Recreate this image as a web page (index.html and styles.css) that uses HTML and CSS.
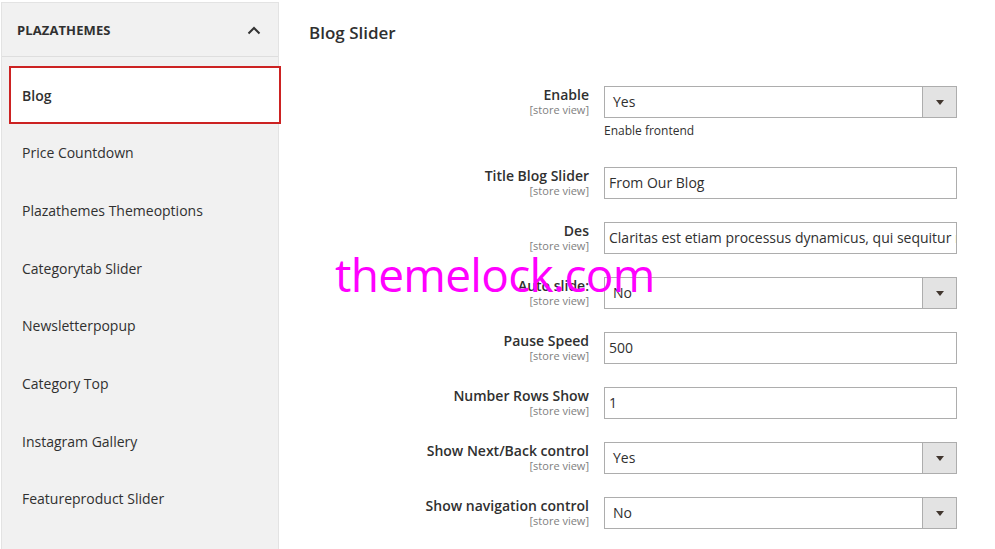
FILE: index.html
```html
<!DOCTYPE html>
<html>
<head>
<meta charset="utf-8">
<link rel="stylesheet" href="styles.css">
</head>
<body>
<div class="page">
  <aside class="sidebar">
    <div class="side-head">
      <span class="side-title">PLAZATHEMES</span>
      <svg class="chev" width="14" height="9" viewBox="0 0 14 9"><path d="M1.5 7.5 L7 2 L12.5 7.5" fill="none" stroke="#333" stroke-width="2"/></svg>
    </div>
    <ul class="side-list">
      <li class="side-item active">Blog</li>
      <li class="side-item">Price Countdown</li>
      <li class="side-item">Plazathemes Themeoptions</li>
      <li class="side-item">Categorytab Slider</li>
      <li class="side-item">Newsletterpopup</li>
      <li class="side-item">Category Top</li>
      <li class="side-item">Instagram Gallery</li>
      <li class="side-item">Featureproduct Slider</li>
    </ul>
  </aside>
  <main class="main">
    <h1 class="section-title">Blog Slider</h1>
    <div class="form">
      <div class="row">
        <div class="label"><span class="lbl">Enable</span><span class="scope">[store view]</span></div>
        <div class="control">
          <div class="select"><span class="val">Yes</span><span class="arrow"></span></div>
          <div class="note">Enable frontend</div>
        </div>
      </div>
      <div class="row">
        <div class="label"><span class="lbl">Title Blog Slider</span><span class="scope">[store view]</span></div>
        <div class="control"><div class="input">From Our Blog</div></div>
      </div>
      <div class="row">
        <div class="label"><span class="lbl">Des</span><span class="scope">[store view]</span></div>
        <div class="control"><div class="input">Claritas est etiam processus dynamicus, qui sequitur mutationem consuetudium lectorum.</div></div>
      </div>
      <div class="row">
        <div class="label"><span class="lbl">Auto slide:</span><span class="scope">[store view]</span></div>
        <div class="control"><div class="select"><span class="val">No</span><span class="arrow"></span></div></div>
      </div>
      <div class="row">
        <div class="label"><span class="lbl">Pause Speed</span><span class="scope">[store view]</span></div>
        <div class="control"><div class="input">500</div></div>
      </div>
      <div class="row">
        <div class="label"><span class="lbl">Number Rows Show</span><span class="scope">[store view]</span></div>
        <div class="control"><div class="input">1</div></div>
      </div>
      <div class="row">
        <div class="label"><span class="lbl">Show Next/Back control</span><span class="scope">[store view]</span></div>
        <div class="control"><div class="select"><span class="val">Yes</span><span class="arrow"></span></div></div>
      </div>
      <div class="row">
        <div class="label"><span class="lbl">Show navigation control</span><span class="scope">[store view]</span></div>
        <div class="control"><div class="select"><span class="val">No</span><span class="arrow"></span></div></div>
      </div>
    </div>
  </main>
</div>
<div class="watermark">themelock.com</div>
</body>
</html>
```

FILE: styles.css
```css
* { box-sizing: border-box; }
html, body { margin: 0; padding: 0; background: #fff; }
body {
  font-family: "Open Sans", "Liberation Sans", sans-serif;
  color: #303030;
  overflow: hidden;
}
.page {
  display: flex;
  min-height: 100vh;
  padding: 2px 0 0 1px;
}
.sidebar {
  width: 278px;
  flex: none;
  background: #f1f1f1;
  border: 1px solid #e3e3e3;
  border-bottom: none;
}
.side-head {
  height: 54px;
  display: flex;
  align-items: center;
  justify-content: space-between;
  padding: 0 17px 0 15px;
  border-bottom: 1px solid #dedede;
}
.side-title {
  font-size: 13px;
  font-weight: 700;
  color: #303030;
  letter-spacing: 0.1px;
}
.chev { display: block; margin-top: 1px; }
.side-list {
  list-style: none;
  margin: 9px 0 0 0;
  padding: 0;
}
.side-item {
  height: 57.7px;
  display: flex;
  align-items: center;
  padding-left: 20px;
  font-size: 14px;
  color: #303030;
}
.side-item.active {
  height: 58px;
  background: #fff;
  border: 2px solid #cc2222;
  margin-left: 7px;
  margin-right: -3px;
  padding-left: 11px;
  font-weight: 600;
}
.main {
  flex: 1;
  padding: 19px 0 0 30px;
}
.section-title {
  margin: 0;
  font-size: 17px;
  font-weight: 600;
  line-height: 24px;
  color: #303030;
}
.form {
  margin-top: 41px;
  display: flex;
  flex-direction: column;
  gap: 23px;
}
.row {
  display: grid;
  grid-template-columns: 280px 353px;
  column-gap: 15px;
}
.label {
  display: flex;
  flex-direction: column;
  align-items: flex-end;
  text-align: right;
}
.lbl {
  font-size: 14px;
  font-weight: 600;
  line-height: 18px;
  color: #303030;
}
.scope {
  font-size: 11px;
  line-height: 12px;
  color: #808080;
}
.input, .select {
  height: 32px;
  border: 1px solid #adadad;
  background: #fff;
  font-size: 14px;
  line-height: 30px;
  color: #303030;
  padding-left: 4px;
  white-space: nowrap;
  overflow: hidden;
}
.select {
  display: flex;
  padding-left: 0;
}
.select .val {
  flex: 1;
  padding-left: 8px;
}
.arrow {
  width: 34px;
  flex: none;
  background: #e3e3e3;
  border-left: 1px solid #adadad;
  position: relative;
}
.arrow::after {
  content: "";
  position: absolute;
  left: 13px;
  top: 13px;
  border-left: 4px solid transparent;
  border-right: 4px solid transparent;
  border-top: 5px solid #41362f;
}
.note {
  margin-top: 4px;
  margin-bottom: 4px;
  font-size: 12px;
  line-height: 18px;
  color: #303030;
}
.watermark {
  position: absolute;
  left: 335px;
  top: 251px;
  font-family: "Open Sans", sans-serif;
  font-size: 46px;
  line-height: 46px;
  letter-spacing: -0.7px;
  color: #ff00ff;
  white-space: nowrap;
}
```
